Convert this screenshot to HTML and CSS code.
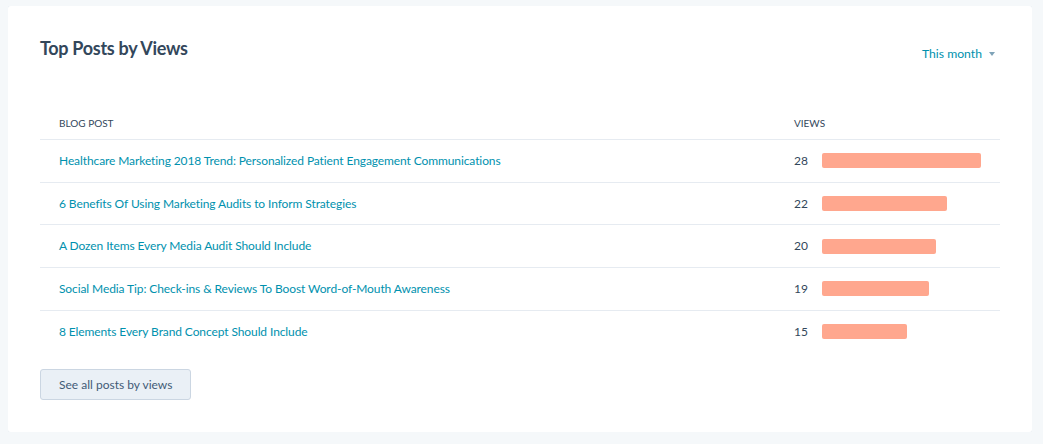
FILE: index.html
```html
<!DOCTYPE html>
<html>
<head>
<meta charset="utf-8">
<link rel="stylesheet" href="styles.css">
</head>
<body>
<div class="card">
  <div class="card-head">
    <h2 class="title">Top Posts by Views</h2>
    <div class="range">This month <span class="caret"></span></div>
  </div>
  <table class="posts">
    <thead>
      <tr><th class="col-post">BLOG POST</th><th class="col-views">VIEWS</th></tr>
    </thead>
    <tbody>
      <tr><td><a class="link">Healthcare Marketing 2018 Trend: Personalized Patient Engagement Communications</a></td><td><div class="views"><span class="num">28</span><span class="bar" style="width:160px"></span></div></td></tr>
      <tr><td><a class="link">6 Benefits Of Using Marketing Audits to Inform Strategies</a></td><td><div class="views"><span class="num">22</span><span class="bar" style="width:125px"></span></div></td></tr>
      <tr><td><a class="link">A Dozen Items Every Media Audit Should Include</a></td><td><div class="views"><span class="num">20</span><span class="bar" style="width:114px"></span></div></td></tr>
      <tr><td><a class="link">Social Media Tip: Check-ins &amp; Reviews To Boost Word-of-Mouth Awareness</a></td><td><div class="views"><span class="num">19</span><span class="bar" style="width:107px"></span></div></td></tr>
      <tr><td><a class="link">8 Elements Every Brand Concept Should Include</a></td><td><div class="views"><span class="num">15</span><span class="bar" style="width:85px"></span></div></td></tr>
    </tbody>
  </table>
  <button class="btn">See all posts by views</button>
</div>
</body>
</html>
```
FILE: styles.css
```css
html, body { background: #f5f8fa; }
body {
  margin: 6px 11px 0 8px;
  font-family: Lato, "Noto Sans", sans-serif;
  color: #33475b;
}
.card {
  background: #fff;
  border-radius: 3px;
  box-shadow: 0 0 0 1px #eef2f6, 0 1px 3px rgba(45, 62, 80, 0.08);
  padding: 32px;
  height: 362px;
}
.card-head {
  display: flex;
  justify-content: space-between;
  align-items: flex-start;
  height: 20px;
}
.title {
  margin: 0;
  font-size: 18px;
  letter-spacing: -0.3px;
  line-height: 20px;
  font-weight: 700;
  color: #33475b;
}
.range {
  margin-top: 8px;
  margin-right: 5px;
  font-size: 12.2px;
  line-height: 16px;
  color: #0091ae;
  display: flex;
  align-items: center;
}
.caret {
  display: inline-block;
  width: 0; height: 0;
  border-left: 3.5px solid transparent;
  border-right: 3.5px solid transparent;
  border-top: 4px solid #7fa3b8;
  margin-left: 7px;
}
.posts {
  margin-top: 49px;
  width: 960px;
  border-collapse: collapse;
  table-layout: fixed;
}
.posts th {
  text-align: left;
  font-weight: 400;
  font-size: 10px;
  line-height: 16px;
  padding: 8px 19px;
  color: #33475b;
  border-bottom: 1px solid #e6ebf1;
}
.posts th.col-views { width: 187px; padding-left: 20px; }
.posts td {
  padding: 12px 19px;
  line-height: 17.7px;
  font-size: 12px;
  letter-spacing: -0.1px;
  border-bottom: 1px solid #e6ebf1;
}
.posts td + td { padding-left: 20px; }
.posts tbody tr:last-child td { border-bottom: none; }
.link { color: #0091ae; text-decoration: none; }
.views { display: flex; align-items: center; }
.num { width: 28px; color: #33475b; letter-spacing: 0; }
.bar {
  display: block;
  height: 15px;
  background: #ffa78e;
  border-radius: 2px;
}
.btn {
  margin-top: 16px;
  display: block;
  height: 31px;
  padding: 0 18px;
  background: #eaf0f6;
  border: 1px solid #cbd6e2;
  border-radius: 3px;
  font-family: Lato, "Noto Sans", sans-serif;
  font-size: 12px;
  color: #425b76;
}
```
